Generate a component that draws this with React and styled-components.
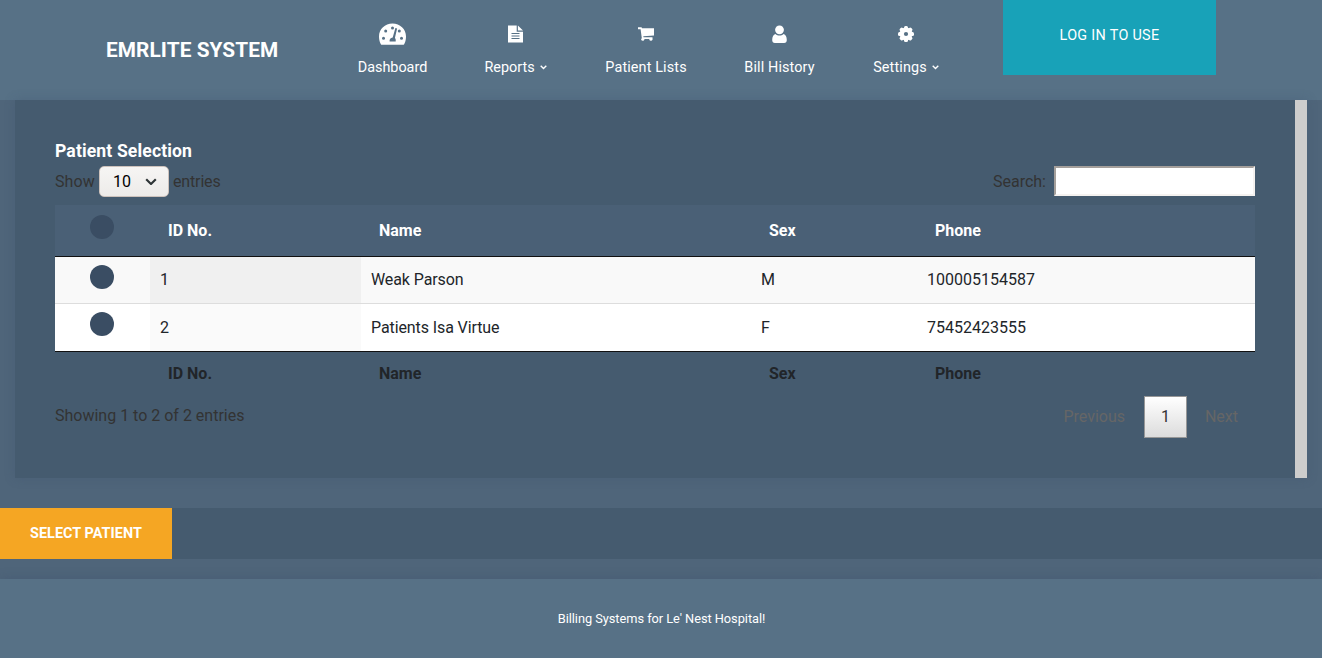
import React from "react";
import styled, { createGlobalStyle } from "styled-components";

const Global = createGlobalStyle`
  *{box-sizing:border-box}
  body{margin:0;background:#4f657a;font-family:Roboto,"Liberation Sans",sans-serif;font-size:16px;line-height:24px;color:#212529;overflow:hidden}
`;
const Page = styled.div`height:658px;display:flex;flex-direction:column;overflow:hidden;`;
const Header = styled.header`height:100px;flex:none;background:#577186;display:flex;padding-left:106px;`;
const Brand = styled.h1`margin:0;width:224px;font-size:20.8px;font-weight:700;line-height:100px;color:#fff;white-space:nowrap;letter-spacing:.08px;`;
const Nav = styled.nav`display:flex;width:673px;`;
const NavItem = styled.a`
  display:flex;flex-direction:column;align-items:center;color:#fff;font-size:14.4px;
  width:${p => p.$w}px;margin-left:${p => p.$gap}px;white-space:nowrap;
`;
const IconBox = styled.span`height:32px;margin-top:18px;display:flex;align-items:center;justify-content:center;svg{display:block}`;
const NavLabel = styled.span`
  display:flex;align-items:center;gap:5px;line-height:24px;margin-top:6px;letter-spacing:${p => p.$track || 0}px;
  svg{margin-bottom:1px}
`;
const Login = styled.button`width:213px;height:75px;border:0;background:#18a2b8;color:#fff;font:400 14.4px/20px Roboto,sans-serif;padding:0 0 4px;letter-spacing:.3px;`;
const Panel = styled.main`
  margin:0 15px;height:378px;flex:none;background:#455b6f;border-right:12px solid #cdcdcd;padding:40px;
  box-shadow:0 0 10px rgba(60,80,110,.3);
`;
const Title = styled.h2`margin:0;font-size:17.6px;line-height:22px;font-weight:700;color:#fff;letter-spacing:.12px;`;
const Controls = styled.div`display:flex;justify-content:space-between;height:31px;margin-top:4px;color:#333;`;
const Inline = styled.label`display:flex;align-items:center;gap:${p => p.$gap}px;`;
const Word = styled.span`width:${p => p.$w}px;letter-spacing:${p => p.$track || 0}px;`;
const Select = styled.span`
  width:70px;height:31px;border:1px solid #cdc2bc;border-radius:5px;background:linear-gradient(#f6f5f4,#edebe9);
  display:flex;align-items:center;justify-content:space-between;padding:0 11px 0 13px;color:#000;
`;
const Search = styled.input`width:201px;height:30px;border:2px solid;border-color:#a49f9b #f5f2f0 #f5f2f0 #a49f9b;background:#fff;padding:0;align-self:flex-start;`;
const Table = styled.div`margin-top:8px;`;
const Row = styled.div`
  display:grid;grid-template-columns:95px 211px 390px 166px 1fr;height:${p => p.$h}px;
  background:${p => p.$bg || "transparent"};border-bottom:${p => p.$line ? `1px solid ${p.$line}` : 0};
`;
const Cell = styled.div`
  display:flex;align-items:center;padding:0 10px 0 ${p => p.$head ? 18 : 10}px;
  font-weight:${p => p.$head ? 700 : 400};color:${p => p.$color || "#212529"};background:${p => p.$bg || "transparent"};
  letter-spacing:${p => p.$track || 0}px;
`;
const CheckCell = styled.div`display:flex;justify-content:center;align-items:flex-start;padding-top:${p => p.$top || 0}px;padding-right:1px;`;
const Dot = styled.span`width:24px;height:24px;border-radius:50%;background:#3a4d63;`;
const Foot = styled.div`display:flex;justify-content:space-between;color:#333;height:42px;`;
const Info = styled.span`line-height:40px;`;
const Pager = styled.div`display:flex;line-height:42px;color:#666;`;
const PageLink = styled.span`padding:0 17px;&:last-child{padding:0 0 0 1px;width:68px;text-align:center}`;
const Current = styled.span`width:43px;margin:0 0 0 2px;height:42px;line-height:40px;border:1px solid #979797;text-align:center;color:#333;background:linear-gradient(#fff,#dcdcdc);`;
const Actions = styled.section`margin-top:30px;height:51px;flex:none;background:#455b6f;display:flex;`;
const Choose = styled.button`width:172px;border:0;background:#f5a623;color:#fff;font:700 14.4px/20px Roboto,sans-serif;padding:1px 0 0;letter-spacing:.05px;`;
const Footer = styled.footer`margin-top:20px;flex:1;background:#577186;color:#fff;text-align:center;font-size:12.8px;letter-spacing:-.04px;line-height:80px;padding-left:1px;box-shadow:0 0 10px rgba(60,80,110,.4);`;

const Chevron = ({ size, color, width = 2 }) => (
  <svg width={size} height={size * .6} viewBox="0 0 10 6" fill="none" stroke={color} strokeWidth={width}><path d="M1 1l4 4 4-4" /></svg>
);
const Gauge = () => (
  <svg width="28" height="22" viewBox="0.5 0 28 22">
    <path fill="#fff" d="M14 .5C6.500.5.5 6 .5 13.500c0 2.500.5 5 1.500 7 .3.700.700 1.300 1.300 1.300h21.400c.600 0 1-.6 1.300-1.300 1-2 1.500-4.500 1.500-7C27.500 6 21.500.5 14 .5z" />
    <g fill="#577186"><circle cx="14" cy="5" r="1.500" /><circle cx="7.200" cy="8" r="1.500" /><circle cx="20.800" cy="8" r="1.500" /><circle cx="5" cy="15.300" r="1.500" /><circle cx="23" cy="15.300" r="1.500" />
      <path d="M16.900 5l1.700.4-2.200 9.600c.7.600 1 1.600.8 3.400h-6.100c-.3-2.300.8-3.700 3.100-4z" /></g>
  </svg>
);
const FileIcon = () => (
  <svg width="15" height="18" viewBox="0 0 15 18"><path fill="#fff" d="M0 .500h8.700v6.200H15V17.500H0zM9.900.500L15 5.500H9.900z" /><path stroke="#577186" strokeWidth="1.200" d="M3.500 8.500h8M3.500 11h8M3.500 13.500h8" /></svg>
);
const Cart = () => (
  <svg width="16" height="14" viewBox="0 0 16 14" fill="#fff"><path d="M0 .3h3.500l.6 1H16v7.200L5.300 9.300l.2.900h9v1.800H3.900L2.600 2.200H0z" /><circle cx="4.800" cy="12.300" r="1.500" /><circle cx="12.900" cy="12.300" r="1.500" /></svg>
);
const User = () => (
  <svg width="15" height="18" viewBox="0 0 15 18" fill="#fff"><circle cx="7.500" cy="4.800" r="4.400" /><path d="M3.400 8.900c2.500 2 5.700 2 8.200 0 2 .5 3.200 2.500 3.200 6.200 0 2-1 2.900-2.700 2.900H2.900C1.200 18 .2 17.100.2 15.100c0-3.700 1.200-5.700 3.200-6.200z" /></svg>
);
const Gear = () => (
  <svg width="16" height="16" viewBox="0 0 16 16"><g fill="#fff"><circle cx="8" cy="8" r="6.500" />{[0, 45, 90, 135].map(a => <rect key={a} x="6" y="0" width="4" height="16" rx="1.500" transform={`rotate(${a} 8 8)`} />)}</g><circle cx="8" cy="8" r="2.100" fill="#577186" /></svg>
);

const nav = [
  ["Dashboard", Gauge, 70, 27.5, 0], ["Reports", FileIcon, 64, 56, 0], ["Patient Lists", Cart, 84, 56.5, .13],
  ["Bill History", User, 72, 55.5, .12], ["Settings", Gear, 68, 56.5, .14],
];
const heads = ["ID No.", "Name", "Sex", "Phone"];
const patients = [["1", "Weak Parson", "M", "100005154587"], ["2", "Patients Isa Virtue", "F", "75452423555"]];

export default function App() {
  return (
    <Page>
      <Global />
      <Header>
        <Brand>EMRLITE SYSTEM</Brand>
        <Nav>
          {nav.map(([label, Icon, w, gap, track]) => (
            <NavItem key={label} $w={w} $gap={gap}>
              <IconBox><Icon /></IconBox>
              <NavLabel $track={track}>{label}{(label === "Reports" || label === "Settings") && <Chevron size={7} color="#fff" />}</NavLabel>
            </NavItem>
          ))}
        </Nav>
        <Login>LOG IN TO USE</Login>
      </Header>
      <Panel>
        <Title>Patient Selection</Title>
        <Controls>
          <Inline $gap={4}><Word $w={40} $track={.1}>Show</Word><Select>10<Chevron size={12} color="#2e3436" width={1.8} /></Select><Word $w={48} $track={-.15}>entries</Word></Inline>
          <Inline $gap={8}>Search: <Search /></Inline>
        </Controls>
        <Table>
          <Row $h={52} $bg="#4a6076" $line="#111">
            <CheckCell $top={10}><Dot /></CheckCell>
            {heads.map(h => <Cell key={h} $head $color="#fff">{h}</Cell>)}
          </Row>
          {patients.map((row, i) => (
            <Row key={row[0]} $h={i ? 48 : 47} $bg={i ? "#fff" : "#f9f9f9"} $line={i ? "#111" : "#ddd"}>
              <CheckCell $top={8}><Dot /></CheckCell>
              {row.map((c, j) => <Cell key={j} $track={j === 1 ? -.1 : 0} $bg={j ? "transparent" : i ? "#fafafa" : "#f0f0f0"}>{c}</Cell>)}
            </Row>
          ))}
          <Row $h={44}>
            <CheckCell />
            {heads.map(h => <Cell key={h} $head>{h}</Cell>)}
          </Row>
        </Table>
        <Foot>
          <Info>Showing 1 to 2 of 2 entries</Info>
          <Pager><PageLink>Previous</PageLink><Current>1</Current><PageLink>Next</PageLink></Pager>
        </Foot>
      </Panel>
      <Actions><Choose>SELECT PATIENT</Choose></Actions>
      <Footer>Billing Systems for Le' Nest Hospital!</Footer>
    </Page>
  );
}
